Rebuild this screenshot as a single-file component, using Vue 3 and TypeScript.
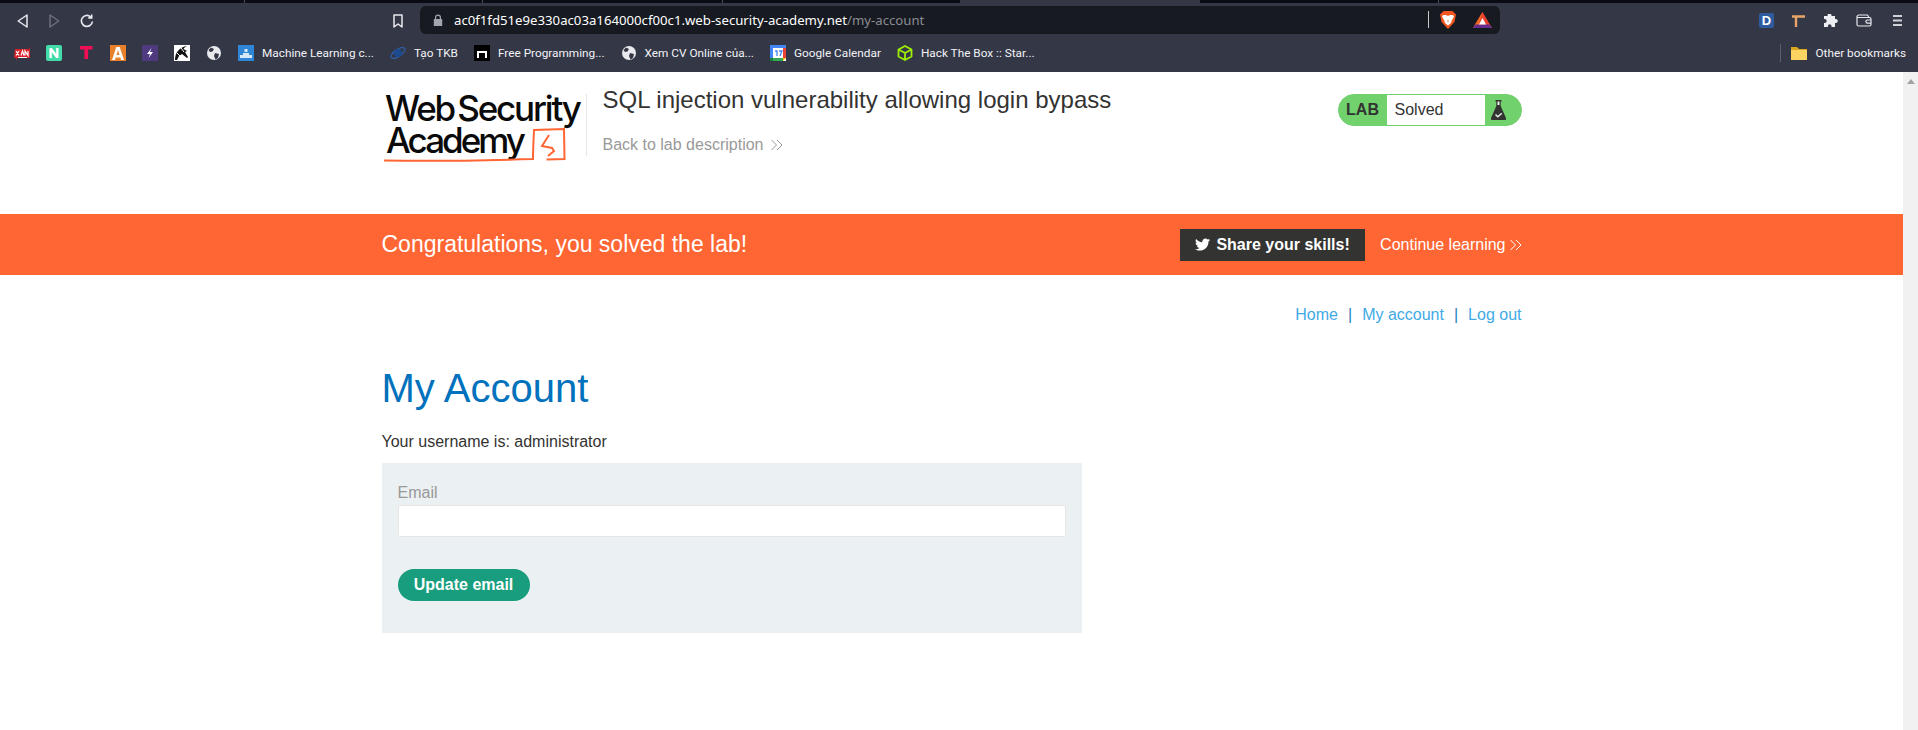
<script setup lang="ts">
const tabSeparators = [244, 482, 722, 1438]
const navLinks = ['Home', 'My account', 'Log out']
</script>

<template>
  <div class="browser">
    <div class="tab-strip">
      <span class="tab-strip__active"></span>
      <span v-for="x in tabSeparators" :key="x" class="tab-strip__sep" :style="{ left: x + 'px' }"></span>
    </div>

    <div class="toolbar">
      <div class="toolbar__nav">
        <svg class="nav-icon" viewBox="0 0 11 14"><path d="M10 1 1.200 7 10 13z" fill="none" stroke="#e8e9ee" stroke-width="1.500" stroke-linejoin="round" /></svg>
        <svg class="nav-icon" viewBox="0 0 11 14"><path d="m1 1 8.800 6L1 13z" fill="none" stroke="#6c6f7d" stroke-width="1.500" stroke-linejoin="round" /></svg>
        <svg class="nav-icon nav-icon--reload" viewBox="0 0 14 14"><path d="M12.400 7.500A5.500 5.500 0 1 1 10.600 2.800M11.700.5v3.400H8.300" fill="none" stroke="#e8e9ee" stroke-width="1.600" /></svg>
      </div>
      <svg class="bookmark-icon" viewBox="0 0 10 14"><path d="M1 1h8v12L5 10l-4 3z" fill="none" stroke="#e8e9ee" stroke-width="1.500" stroke-linejoin="round" /></svg>
      <div class="address">
        <svg class="address__lock" viewBox="0 0 10 12"><path d="M2 5V3.500a3 3 0 0 1 6 0V5h1.200v7H.8V5zm1.200 0h3.600V3.500a1.800 1.800 0 0 0-3.600 0z" fill="#a3a5ad" /></svg>
        <span class="address__url">ac0f1fd51e9e330ac03a164000cf00c1.web-security-academy.net<span class="address__path">/my-account</span></span>
        <span class="address__sep"></span>
        <svg class="address__brave" viewBox="0 0 16 18">
          <path d="M3.500 0h9L15 2.500l1 1-1.500 7.500L8 18 1.500 11 0 3.500l1-1z" fill="#f1561f" />
          <path d="M3 4h3l2 1 2-1h3l1 1.500-2.500 4.500-.5 2-3 2.500L5 12l-.5-2L2 5.500z" fill="#fff" />
          <path d="M6.600 9.500h2.800L8 11.500z" fill="#f39a78" />
        </svg>
        <svg class="address__bat" viewBox="0 0 19 16">
          <path d="M9.500 0 0 16h19z" fill="#e8412f" />
          <path d="M9.500 0 0 16h5z" fill="#f26a21" />
          <path d="M0 16l2.500-3.500h14L19 16z" fill="#662d91" />
          <path d="M9.500 6 6 12.500h7z" fill="#fff" />
        </svg>
      </div>
      <div class="toolbar__extensions">
        <span class="ext-d">D</span>
        <svg class="ext-pick" viewBox="0 0 13 12"><path d="M0 1.500h13M4 1.500V12" fill="none" stroke="#e8a468" stroke-width="2.400" /></svg>
        <svg class="ext-puzzle" viewBox="0 0 15 13"><path d="M4.500 2V1.500a2 2 0 0 1 4 0V2H12v3h.8a2 2 0 0 1 0 4H12v4H8.500v-1a1.800 1.800 0 0 0-3.600 0v1H1V9h.7a2 2 0 0 0 0-4H1V2z" fill="#eceef2" /></svg>
        <svg class="ext-wallet" viewBox="0 0 16 13"><path d="M1 3C1 1.800 1.800 1 3 1h8.500L13 3.500M1 3v7.500c0 .8.700 1.500 1.500 1.500h11c.8 0 1.500-.7 1.500-1.500V5c0-.8-.7-1.500-1.500-1.500H1.500M15 6h-3.500a1.500 1.500 0 0 0 0 3.200H15" fill="none" stroke="#e8e9ee" stroke-width="1.200" /></svg>
        <svg class="ext-menu" viewBox="0 0 9 11"><path d="M0 1h9M0 5.500h9M0 10h9" stroke="#cfd1d7" stroke-width="1.800" /></svg>
      </div>
    </div>

    <div class="bookmarks">
      <div class="bookmarks__list">
        <span class="bm bm--icon">
          <svg class="bm__svg" viewBox="0 0 16 16"><path d="M1 4h14V1l1 4v8H3v3l-1-3H0z" fill="#d8232a" /><path d="m2 6 3 4.500M5 6l-3 4.500M7 10.500 8.500 6l1.500 4.500M11 10.500V6l3 4.500V6M4 12.500h9" stroke="#fff" stroke-width="1.200" fill="none" /></svg>
        </span>
        <span class="bm bm--icon">
          <svg class="bm__svg" viewBox="0 0 16 16"><rect width="16" height="16" rx="2" fill="#43dcaa" /><path d="M3.500 13V3h2.400l4.300 5.800V3h2.300v10h-2.300L5.800 7.200V13z" fill="#fff" /></svg>
        </span>
        <span class="bm bm--icon">
          <svg class="bm__svg" viewBox="0 0 16 16"><path d="M2 1h12.500v3.500h-4.400V14H6.400V4.500H2z" fill="#ee0f54" /></svg>
        </span>
        <span class="bm bm--icon">
          <svg class="bm__svg" viewBox="0 0 16 16"><path d="M0 0h16v16H0z" fill="#e9812a" /><path d="M6.300 2h3.400L14 15h-3l-.7-2.400H5.700L5 15H2zm.2 8h3L8 5z" fill="#fff" /></svg>
        </span>
        <span class="bm bm--icon">
          <svg class="bm__svg" viewBox="0 0 16 16"><path d="M0 0h16v16H0z" fill="#4f3a80" /><path d="M9.500 3 5 9h3l-1.500 4L11 7H8z" fill="#fff" /></svg>
        </span>
        <span class="bm bm--icon">
          <svg class="bm__svg" viewBox="0 0 16 16"><path d="M0 0h16v16H0z" fill="#fff" /><path d="M1 15C1 7 6 2 13 1c-2 1-3 2-3.500 3L13 6l-2 1 3 5-1 1-5-4-3 2-2 4z" fill="#111" /><path d="M3 8 6 11M7 3l3 4" stroke="#fff" /></svg>
        </span>
        <span class="bm bm--icon">
          <svg class="bm__svg" viewBox="0 0 16 16"><circle cx="8" cy="8" r="7" fill="#e9eaee" /><path d="M5 2.500 8 4 6.500 6.500 4 7 2.500 5zM9 8l4 1-1 4-2.500 1.500L8 11z" fill="#343746" /></svg>
        </span>
        <span class="bm">
          <svg class="bm__svg" viewBox="0 0 16 16"><path d="M0 0h16v16H0z" fill="#2f86d6" /><path d="M2 13v-3h3V8h6v2h3v3zM6.500 4h3v3h-3z" fill="#d7e8f7" /></svg>
          Machine Learning c...
        </span>
        <span class="bm">
          <svg class="bm__svg" viewBox="0 0 16 16"><ellipse cx="8" cy="8" rx="8" ry="3.500" transform="rotate(-35 8 8)" fill="none" stroke="#2d5fa8" stroke-width="1.300" /><circle cx="8" cy="8" r="4" fill="#1c4a8c" /></svg>
          Tạo TKB
        </span>
        <span class="bm">
          <svg class="bm__svg" viewBox="0 0 16 16"><path d="M0 0h16v16H0z" fill="#000" /><path d="M3 13V6h10v7h-2V8H5v5z" fill="#fff" /></svg>
          Free Programming...
        </span>
        <span class="bm">
          <svg class="bm__svg" viewBox="0 0 16 16"><circle cx="8" cy="8" r="7" fill="#e9eaee" /><path d="M5 2.500 8 4 6.500 6.500 4 7 2.500 5zM9 8l4 1-1 4-2.500 1.500L8 11z" fill="#343746" /></svg>
          Xem CV Online của...
        </span>
        <span class="bm">
          <svg class="bm__svg" viewBox="0 0 16 16">
            <path d="M0 0h16v16H0z" fill="#fff" />
            <path d="M0 0h16v3H0zM0 3h3v10H0z" fill="#4285f4" />
            <path d="M13 3h3v10h-3z" fill="#ea4335" />
            <path d="M3 13h10v3H3z" fill="#34a853" />
            <path d="M0 13h3v3H0z" fill="#188038" />
            <path d="M13 13h3l-3 3z" fill="#fbbc04" />
            <path d="M5 6h2v5M9 6h3l-2 5" fill="none" stroke="#4285f4" stroke-width="1.300" />
          </svg>
          Google Calendar
        </span>
        <span class="bm">
          <svg class="bm__svg" viewBox="0 0 16 16"><path d="m8 1 6.500 3.500v7L8 15l-6.500-3.500v-7zM1.500 4.500 8 8l6.500-3.500M8 8v7" fill="none" stroke="#9fef00" stroke-width="1.800" stroke-linejoin="round" /></svg>
          Hack The Box :: Star...
        </span>
      </div>
      <div class="bookmarks__other">
        <span class="bookmarks__sep"></span>
        <svg class="bm__svg" viewBox="0 0 16 16"><path d="M0 2h6l2 2h8v11H0z" fill="#d9a520" /><path d="M0 5h16v10H0z" fill="#fcd462" /></svg>
        Other bookmarks
      </div>
    </div>

    <div class="viewport">
      <div class="page">
        <header class="lab-header">
          <div class="lab-header__left">
            <svg class="logo" viewBox="0 0 200 84">
              <text class="logo__text" x="3" y="37" textLength="197" lengthAdjust="spacing">Web Security</text>
              <text class="logo__text" x="4" y="69" textLength="140" lengthAdjust="spacing">Academy</text>
              <path d="M2 76.500c50 1 100 0 149-1.500 0-9 .5-19 1-29l30-1 .5 30-18 .5" fill="none" stroke="#ff6633" stroke-width="2" />
              <path d="m167 51-7 11 10 2 2 3-6 5" fill="none" stroke="#ff6633" stroke-width="2" />
            </svg>
            <div class="lab-title">
              <h2 class="lab-title__name">SQL injection vulnerability allowing login bypass</h2>
              <a class="lab-title__back">Back to lab description
                <svg class="chevrons" viewBox="0 0 12 12"><path d="m.5 1 5 5-5 5M6 1l5 5-5 5" fill="none" stroke="currentColor" /></svg>
              </a>
            </div>
          </div>
          <div class="lab-status">
            <span class="lab-status__label">LAB</span>
            <span class="lab-status__value">Solved</span>
            <svg class="lab-status__flask" viewBox="0 0 15 20">
              <path d="M4.500 0h6v1.500h-.8V6L15 18q.4 2-1.500 2h-12Q-.4 20 0 18L5.300 6V1.500h-.8z" fill="#333332" />
              <path d="M6.500 1.500h2v3.500h-2z" fill="#e9f5e8" />
              <path d="m4.500 14.500 2.300 2.300 4-3.600" fill="none" stroke="#e8f2e8" stroke-width="1.400" />
            </svg>
          </div>
        </header>
      </div>

      <section class="banner">
        <div class="banner__inner">
          <span class="banner__message">Congratulations, you solved the lab!</span>
          <div class="banner__actions">
            <button type="button" class="share">
              <svg class="share__icon" viewBox="0 0 24 24"><path d="M24 4.557c-.883.392-1.832.656-2.828.775 1.017-.609 1.798-1.574 2.165-2.724-.951.564-2.05.974-3.127 1.195-.897-.957-2.178-1.555-3.594-1.555-3.179 0-5.515 2.966-4.797 6.045-4.091-.205-7.719-2.165-10.148-5.144-1.29 2.213-.669 5.108 1.523 6.574-.806-.026-1.566-.247-2.229-.616-.054 2.281 1.581 4.415 3.949 4.89-.693.188-1.452.232-2.224.084.626 1.956 2.444 3.379 4.6 3.419-2.07 1.623-4.678 2.348-7.29 2.04 2.179 1.397 4.768 2.212 7.548 2.212 9.142 0 14.307-7.721 14.076-14.646.962-.695 1.797-1.562 2.457-2.549z" fill="#fff" /></svg>
              Share your skills!
            </button>
            <a class="banner__continue">Continue learning
              <svg class="chevrons" viewBox="0 0 12 12"><path d="m.5 1 5 5-5 5M6 1l5 5-5 5" fill="none" stroke="currentColor" /></svg>
            </a>
          </div>
        </div>
      </section>

      <div class="page">
        <nav class="site-nav">
          <template v-for="(link, index) in navLinks" :key="link">
            <span v-if="index > 0" class="site-nav__sep">|</span>
            <a class="site-nav__link">{{ link }}</a>
          </template>
        </nav>
        <h1 class="account-title">My Account</h1>
        <p class="account-user">Your username is: administrator</p>
        <form class="email-form" @submit.prevent>
          <label class="email-form__label" for="email">Email</label>
          <input id="email" class="email-form__input" type="email" />
          <button type="submit" class="email-form__submit">Update email</button>
        </form>
      </div>

      <div class="scrollbar">
        <svg class="scrollbar__arrow" viewBox="0 0 10 6"><path d="M5 0 10 6H0z" fill="#a3a3a3" /></svg>
      </div>
    </div>
  </div>
</template>

<style>
html,
body {
  margin: 0;
  background: #fff;
  overflow: hidden;
}
</style>

<style scoped>
.browser {
  width: 1918px;
  height: 730px;
  display: flex;
  flex-direction: column;
  font-family: "Liberation Sans", Arial, sans-serif;
  overflow: hidden;
}

.tab-strip {
  position: relative;
  height: 3px;
  flex: 0 0 3px;
  background: #0b0b14;
}

.tab-strip__active {
  position: absolute;
  left: 960px;
  top: 0;
  width: 240px;
  height: 3px;
  background: #343746;
}

.tab-strip__sep {
  position: absolute;
  top: 0;
  width: 1px;
  height: 3px;
  background: #4a4c5a;
}

.toolbar {
  height: 35px;
  flex: 0 0 35px;
  background: #343746;
  display: flex;
  align-items: center;
  padding-left: 17px;
  box-sizing: border-box;
}

.toolbar__nav {
  display: flex;
  align-items: center;
  gap: 21px;
  width: 376px;
}

.nav-icon {
  width: 11px;
  height: 14px;
}

.nav-icon--reload {
  width: 14px;
  margin-left: -1px;
}

.bookmark-icon {
  width: 10px;
  height: 14px;
}

.address {
  margin-left: 17px;
  width: 1080px;
  height: 28px;
  margin-top: -2px;
  background: #171a21;
  border-radius: 6px;
  display: flex;
  align-items: center;
  padding-left: 13px;
  box-sizing: border-box;
}

.address__lock {
  width: 10px;
  height: 12px;
}

.address__url {
  margin-left: 11px;
  width: 974px;
  font: 13.200px "Noto Sans", sans-serif;
  color: #fff;
  white-space: nowrap;
}

.address__path {
  color: #8a8c94;
}

.address__sep {
  width: 1px;
  height: 17px;
  background: #c9cad0;
}

.address__brave {
  width: 16px;
  height: 18px;
  margin-left: 11px;
}

.address__bat {
  width: 19px;
  height: 16px;
  margin-left: 17px;
}

.toolbar__extensions {
  display: flex;
  align-items: center;
  margin-left: 259px;
  gap: 18px;
}

.ext-d {
  width: 15px;
  height: 15px;
  border-radius: 2px;
  background: #2e5b9e;
  color: #fff;
  font: 700 13px/15px "Liberation Sans", sans-serif;
  text-align: center;
}

.ext-pick {
  width: 13px;
  height: 12px;
}

.ext-puzzle {
  width: 15px;
  height: 13px;
}

.ext-wallet {
  width: 16px;
  height: 13px;
}

.ext-menu {
  width: 9px;
  height: 11px;
  margin-left: 3px;
}

.bookmarks {
  height: 34px;
  flex: 0 0 34px;
  box-sizing: border-box;
  background: #343746;
  display: flex;
  align-items: center;
  justify-content: space-between;
  padding: 0 12px 4px 6px;
  font: 11.800px Roboto, sans-serif;
  color: #f2f3f6;
}

.bookmarks__list {
  display: flex;
  align-items: center;
}

.bm {
  display: inline-flex;
  align-items: center;
  gap: 8px;
  padding: 0 8px;
  white-space: nowrap;
}

.bm__svg {
  width: 16px;
  height: 16px;
  flex: 0 0 16px;
}

.bookmarks__other {
  display: flex;
  align-items: center;
  gap: 8px;
}

.bookmarks__sep {
  width: 1px;
  height: 18px;
  background: #5d5f6c;
  margin-right: 2px;
}

.viewport {
  position: relative;
  flex: 1;
  background: #fff;
  padding-right: 15px;
  color: #333332;
}

.page {
  width: 1140px;
  margin: 0 auto;
}

.lab-header {
  height: 142px;
  display: flex;
  justify-content: space-between;
  align-items: flex-start;
}

.lab-header__left {
  display: flex;
  align-items: flex-start;
}

.logo {
  width: 200px;
  height: 84px;
  margin-top: 12px;
  flex: 0 0 200px;
}

.logo__text {
  font: 500 35px "Inter", sans-serif;
  word-spacing: -4px;
  fill: #0a0a0a;
}

.lab-title {
  margin-left: 4px;
  margin-top: 22px;
  padding-left: 16px;
  border-left: 1px solid #e6e6e6;
  height: 62px;
}

.lab-title__name {
  margin: -10px 0 0;
  font-size: 24px;
  font-weight: 400;
  line-height: 32px;
  color: #333332;
}

.lab-title__back {
  display: flex;
  align-items: center;
  gap: 8px;
  margin-top: 19px;
  font-size: 16px;
  line-height: 20px;
  color: #999;
}

.chevrons {
  width: 12px;
  height: 12px;
}

.lab-status {
  margin-top: 22px;
  width: 184px;
  height: 32px;
  box-sizing: border-box;
  border-radius: 16px;
  border: 1px solid #70d16d;
  background: #70d16d;
  display: flex;
  align-items: center;
}

.lab-status__label {
  width: 48px;
  text-align: center;
  font-size: 16px;
  font-weight: 700;
}

.lab-status__value {
  width: 98px;
  height: 30px;
  background: #fff;
  font-size: 16px;
  line-height: 30px;
  padding-left: 8px;
  box-sizing: border-box;
}

.lab-status__flask {
  width: 15px;
  height: 20px;
  margin-left: 6px;
}

.banner {
  height: 61px;
  background: #ff6633;
  color: #fff;
}

.banner__inner {
  width: 1140px;
  height: 100%;
  margin: 0 auto;
  display: flex;
  align-items: center;
  justify-content: space-between;
}

.banner__message {
  font-size: 23px;
}

.banner__actions {
  display: flex;
  align-items: center;
  gap: 15px;
}

.share {
  width: 185px;
  height: 32px;
  padding: 0;
  border: 0;
  background: #333332;
  color: #fff;
  font: 700 16px "Liberation Sans", sans-serif;
  display: flex;
  align-items: center;
  justify-content: center;
  gap: 6px;
}

.share__icon {
  width: 15px;
  height: 15px;
}

.banner__continue {
  display: flex;
  align-items: center;
  gap: 4px;
  font-size: 16px;
}

.site-nav {
  display: flex;
  justify-content: flex-end;
  align-items: center;
  gap: 10px;
  margin-top: 30px;
  font-size: 16px;
  line-height: 20px;
}

.site-nav__link {
  color: #3fa9e5;
}

.site-nav__sep {
  color: #1f7fbd;
}

.account-title {
  margin: 40px 0 0;
  font-size: 40px;
  font-weight: 400;
  line-height: 46px;
  color: #0071bc;
}

.account-user {
  margin: 21px 0 0;
  font-size: 16px;
  line-height: 20px;
}

.email-form {
  margin-top: 11px;
  width: 700px;
  height: 170px;
  box-sizing: border-box;
  padding: 20px 16px 0;
  background: #ebf0f2;
  display: flex;
  flex-direction: column;
  align-items: flex-start;
}

.email-form__label {
  font-size: 16px;
  line-height: 20px;
  color: #999;
}

.email-form__input {
  width: 100%;
  height: 32px;
  margin-top: 2px;
  box-sizing: border-box;
  border: 1px solid #e6e6e6;
  border-radius: 2px;
  background: #fff;
}

.email-form__submit {
  margin-top: 32px;
  width: 132px;
  height: 32px;
  border: 0;
  border-radius: 16px;
  background: #189e7e;
  color: #fff;
  font: 700 16px "Liberation Sans", sans-serif;
}

.scrollbar {
  position: absolute;
  top: 0;
  right: 0;
  bottom: 0;
  width: 15px;
  background: #f1f1f1;
  display: flex;
  justify-content: center;
  padding-top: 7px;
  box-sizing: border-box;
}

.scrollbar__arrow {
  width: 8px;
  height: 5px;
}
</style>
